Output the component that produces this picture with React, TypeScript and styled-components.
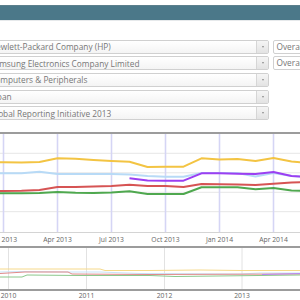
import React from "react";
import styled, { createGlobalStyle } from "styled-components";

const GlobalStyle = createGlobalStyle`
  html, body {
    margin: 0;
    padding: 0;
    background: #fff;
    overflow: hidden;
  }
  body {
    font-family: "Open Sans", "Liberation Sans", sans-serif;
  }
`;

const Page = styled.div`
  width: 300px;
  height: 300px;
  overflow: hidden;
  padding-top: 5px;
  box-sizing: border-box;
`;

const TopBar = styled.div`
  height: 14px;
  background: #4b7889;
  border-top: 1px solid #5b7f8c;
  border-bottom: 1px solid #e6e9eb;
`;

const Filters = styled.div`
  display: flex;
  flex-direction: column;
  gap: 2.7px;
  margin: 18.5px 0 0 -15px;
`;

const FilterRow = styled.div`
  display: flex;
  gap: 3.5px;
`;

const Select = styled.div`
  flex: 0 0 284px;
  height: 14px;
  box-sizing: border-box;
  border: 1px solid #d0d0d0;
  border-radius: 2px;
  background: linear-gradient(#fff, #f4f4f4);
  display: flex;
  align-items: center;
  overflow: hidden;
`;

const SelectText = styled.span`
  flex: 1;
  padding-left: 4px;
  font-size: 8.3px;
  color: #777;
  white-space: nowrap;
`;

const Arrow = styled.span`
  flex: 0 0 11px;
  align-self: stretch;
  border-left: 1px solid #d6d6d6;
  background: linear-gradient(#f5f5f5, #e3e3e3);
  display: flex;
  align-items: center;
  justify-content: center;

  &::after {
    content: "";
    border-left: 1.5px solid transparent;
    border-right: 1.5px solid transparent;
    border-top: 2px solid #8a8a8a;
  }
`;

const Metric = styled.div`
  flex: 0 0 60px;
  height: 14px;
  box-sizing: border-box;
  border: 1px solid #d0d0d0;
  border-radius: 2px;
  padding-left: 3px;
  font-size: 8.3px;
  line-height: 12px;
  color: #777;
  white-space: nowrap;
  overflow: hidden;
`;

const ChartFrame = styled.div`
  margin-top: 12px;
  border-top: 2px solid #9c9c9c;
`;

const Plot = styled.svg<{ $h: number }>`
  display: block;
  width: 300px;
  height: ${({ $h }) => $h}px;
`;

const AxisStrip = styled.svg`
  display: block;
  width: 300px;
  height: 13px;
  border-top: 1px solid #d4d4d4;
  border-bottom: 2px solid #9c9c9c;
`;

const OverviewAxis = styled.svg`
  display: block;
  width: 300px;
  height: 10px;
  border-top: 2px solid #9c9c9c;
`;

const months = (ys: number[], start = -14.5) =>
  ys.map((y, i) => `${start + i * 18},${y}`).join(" ");

const pts = (p: number[][]) => p.map(([x, y]) => `${x},${y}`).join(" ");

const series = [
  {
    color: "#f3c443",
    d: months([28.3, 28.3, 28.5, 28, 24.3, 24.7, 26, 27, 27.7, 33, 32.7, 32.7, 24.3, 25.5, 25, 27, 24, 27.5, 29]),
  },
  {
    color: "#b8daf6",
    d: months([39.3, 39.3, 39.3, 37.7, 40, 40, 40, 40, 40.5, 42, 42.7, 42.7, 39, 39, 39, 42.5, 39, 42, 43]),
  },
  {
    color: "#9b3ff2",
    d: months([44.3, 46.5, 46.7, 46.7, 39.3, 39.3, 39.7, 40, 38, 42, 43], 129.5),
  },
  {
    color: "#d65454",
    d: months([57, 57, 56.8, 56, 53, 53, 52.5, 52, 50.7, 52, 52, 53, 50, 50.3, 50.5, 51, 49.7, 48.5, 48]),
  },
  {
    color: "#4fa84f",
    d: months([59.3, 59.3, 59.3, 59, 58, 58.7, 59, 58.5, 57.3, 60, 60, 60, 53.3, 53.3, 53.3, 55.3, 54, 56.5, 57]),
  },
];

const overview = [
  { color: "#f6d98a", d: pts([[0, 21], [100, 21], [105, 22.5], [150, 22.5], [200, 22], [240, 22.5], [300, 22.5]]) },
  { color: "#c9e3f8", d: pts([[0, 24], [22, 23.5], [70, 24], [100, 24], [140, 25.5], [240, 26], [260, 25], [300, 25]]) },
  { color: "#e08a8a", d: pts([[0, 25.5], [25, 24], [68, 24], [72, 26], [150, 26.5], [300, 26]]) },
  { color: "#8cc88c", d: pts([[0, 29], [22, 29], [27, 27], [80, 27.5], [150, 27.5], [175, 28.5], [300, 27]]) },
  { color: "#b98af2", d: pts([[262, 26.5], [300, 25.5]]) },
];

const quarters = [
  { x: 3.5, label: "Jan 2013" },
  { x: 57.5, label: "Apr 2013" },
  { x: 111.5, label: "Jul 2013" },
  { x: 165.5, label: "Oct 2013" },
  { x: 219.5, label: "Jan 2014" },
  { x: 273.5, label: "Apr 2014" },
];

const years = [
  { x: 8.5, label: "2010" },
  { x: 86.5, label: "2011" },
  { x: 164.5, label: "2012" },
  { x: 242, label: "2013" },
];

const filters = [
  { text: "Hewlett-Packard Company (HP)", metric: "Overall" },
  { text: "Samsung Electronics Company Limited", metric: "Overall" },
  { text: "Computers & Peripherals" },
  { text: "Japan" },
  { text: "Global Reporting Initiative 2013" },
];

export default function App() {
  return (
    <Page>
      <GlobalStyle />
      <TopBar />
      <Filters>
        {filters.map((f) => (
          <FilterRow key={f.text}>
            <Select>
              <SelectText>{f.text}</SelectText>
              <Arrow />
            </Select>
            {f.metric && <Metric>{f.metric}</Metric>}
          </FilterRow>
        ))}
      </Filters>
      <ChartFrame>
        <Plot $h={98} viewBox="0 0 300 98">
          {[19.3, 38.8, 58.3, 77.7].map((y) => (
            <line key={y} x1={0} x2={300} y1={y} y2={y} stroke="#e6e6e6" strokeWidth={1} />
          ))}
          {quarters.map((q) => (
            <line key={q.x} x1={q.x} x2={q.x} y1={0} y2={98} stroke="#d5d5f5" strokeWidth={1.6} />
          ))}
          {series.map((s) => (
            <polyline key={s.color} points={s.d} fill="none" stroke={s.color} strokeWidth={2} strokeLinejoin="round" />
          ))}
        </Plot>
        <AxisStrip viewBox="0 0 300 13">
          {quarters.map((q) => (
            <text key={q.x} x={q.x} y={8.6} textAnchor="middle" fontSize={6.8} fill="#666" fontFamily="Open Sans, sans-serif">
              {q.label}
            </text>
          ))}
        </AxisStrip>
        <Plot $h={41} viewBox="0 0 300 41">
          {years.map((y) => (
            <line key={y.x} x1={y.x} x2={y.x} y1={0} y2={41} stroke="#e2e2e2" strokeWidth={1} />
          ))}
          {overview.map((s) => (
            <polyline key={s.color} points={s.d} fill="none" stroke={s.color} strokeWidth={1} />
          ))}
        </Plot>
        <OverviewAxis viewBox="0 0 300 10">
          {years.map((y) => (
            <text key={y.x} x={y.x} y={6.5} textAnchor="middle" fontSize={6.8} fill="#666" fontFamily="Open Sans, sans-serif">
              {y.label}
            </text>
          ))}
        </OverviewAxis>
      </ChartFrame>
    </Page>
  );
}
